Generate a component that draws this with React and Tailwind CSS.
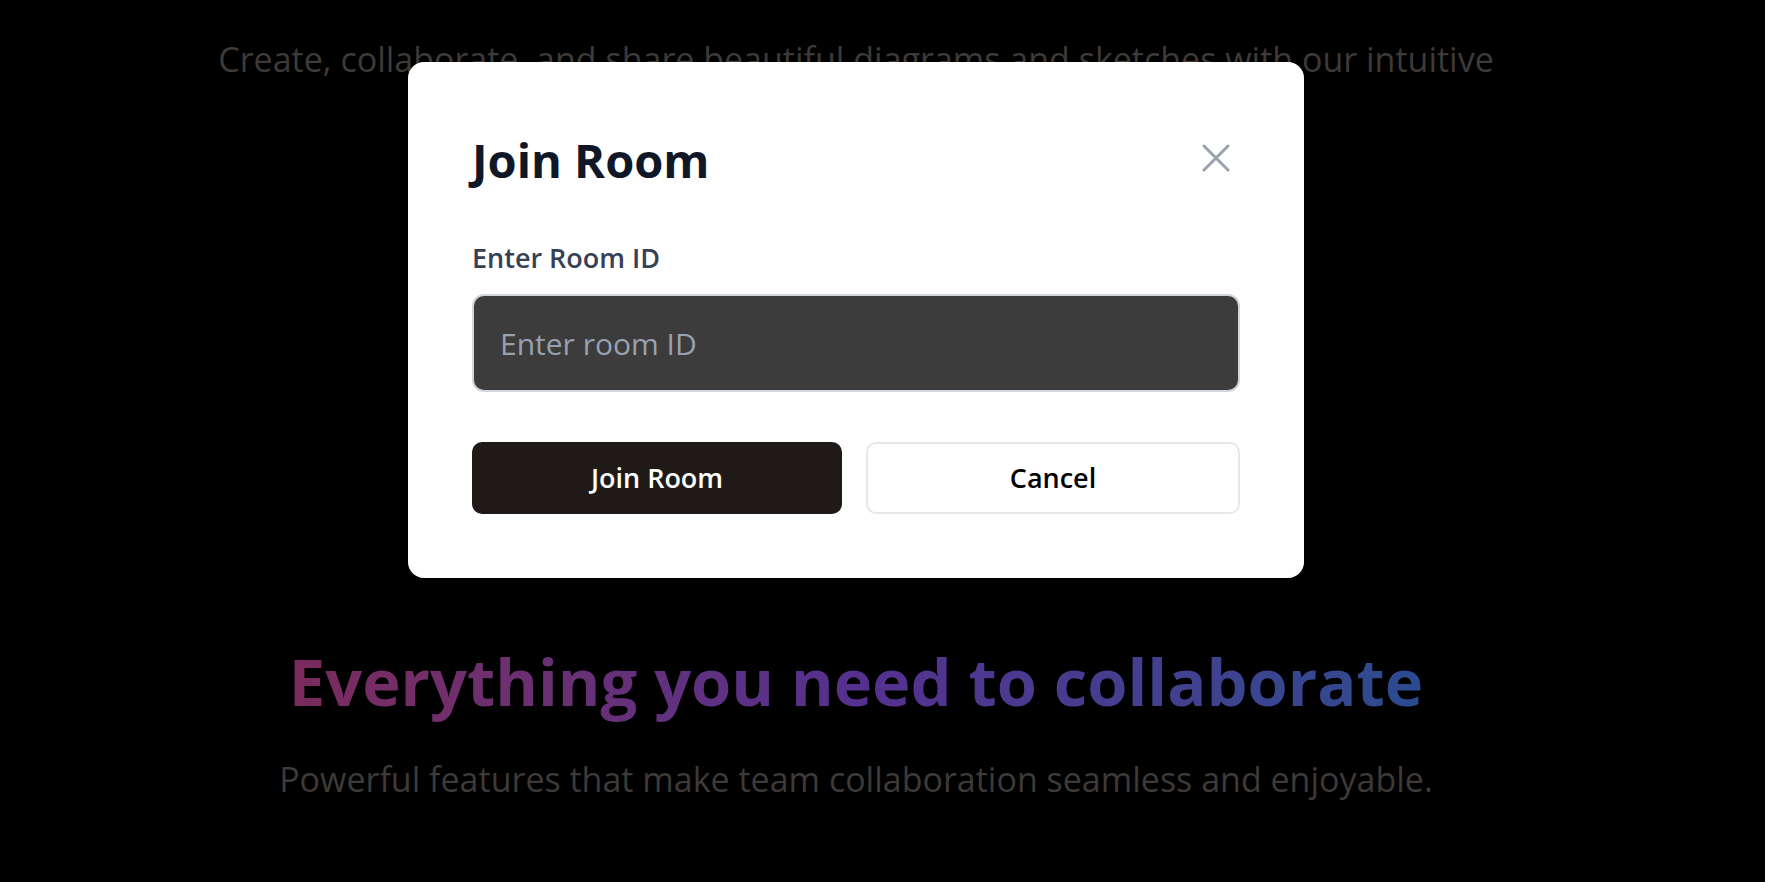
import { useState } from 'react';

function CloseIcon() {
    return (
        <svg width="28" height="28" viewBox="0 0 28 28" fill="none">
            <path d="M2 2l24 24M26 2L2 26" stroke="currentColor" strokeWidth="3" strokeLinecap="round" />
        </svg>
    );
}

function JoinRoomModal({ roomId, setRoomId }) {
    return (
        <div className="fixed inset-0 z-50">
            <div className="w-[1712px] flex justify-center pt-[62px]">
                <div className="w-[896px] bg-white rounded-2xl p-16">
                    {/* Header */}
                    <div className="flex items-start justify-between">
                        <h2 className="text-[47px] leading-[68px] font-bold text-gray-900">Join Room</h2>
                        <button className="mt-[8px] p-[10px] text-gray-400">
                            <CloseIcon />
                        </button>
                    </div>

                    <label className="block mt-[46px] text-[27px] leading-[36px] font-semibold text-gray-700">
                        Enter Room ID
                    </label>
                    <input
                        value={roomId}
                        onChange={(e) => setRoomId(e.target.value)}
                        placeholder="Enter room ID"
                        className="mt-[18px] w-full h-[98px] rounded-xl border-2 border-gray-300 bg-[#3c3c3c] px-[26px] text-[30px] text-white placeholder:text-gray-400 outline-none"
                    />

                    <div className="flex gap-6 mt-[50px]">
                        <button className="flex-1 h-[72px] rounded-[10px] bg-[#1f1a17] text-white text-[27px] font-semibold">
                            Join Room
                        </button>
                        <button className="flex-1 h-[72px] rounded-[10px] border-2 border-gray-200 bg-white text-black text-[27px] font-semibold">
                            Cancel
                        </button>
                    </div>
                </div>
            </div>
        </div>
    );
}

export default function App() {
    const [roomId, setRoomId] = useState('');

    return (
        <div className="min-h-screen bg-black font-['Open_Sans',sans-serif] overflow-hidden">
            <div className="w-[1712px]">
                {/* Hero */}
                <section className="h-[640px] pt-[34px] text-center">
                    <p className="text-[34px] leading-[50px] text-[#3d3a38]">
                        Create, collaborate, and share beautiful diagrams and sketches with our intuitive
                    </p>
                </section>

                {/* Features */}
                <section className="text-center">
                    <h2 className="inline-block text-[65px] leading-[82px] font-bold bg-gradient-to-r from-[#7b2a5c] via-[#55308f] to-[#2a4b8f] bg-clip-text text-transparent">
                        Everything you need to collaborate
                    </h2>
                    <p className="mt-[32px] text-[34px] leading-[50px] text-[#3d3a38]">
                        Powerful features that make team collaboration seamless and enjoyable.
                    </p>
                </section>
            </div>

            <JoinRoomModal roomId={roomId} setRoomId={setRoomId} />
        </div>
    );
}
